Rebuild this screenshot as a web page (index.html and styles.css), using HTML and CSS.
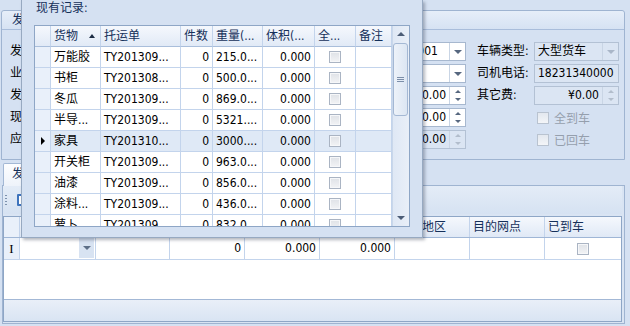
FILE: index.html
```html
<!DOCTYPE html>
<html lang="zh-CN">
<head>
  <meta charset="UTF-8">
  <title>发货登记</title>
  <link rel="stylesheet" href="styles.css">
</head>
<body>
  <div class="window">
    <div class="group">
      <div class="group-head">发货信息</div>
      <div class="group-body">
        <span class="lbl">发货日期:</span>
        <div class="edit"><span class="val">2013-10-08</span><span class="drop"></span></div>
        <span class="lbl">车次编号:</span>
        <div class="edit"><span class="val">20131001</span><span class="drop"></span></div>
        <span class="lbl side">车辆类型:</span>
        <div class="edit off"><span class="val">大型货车</span><span class="drop"></span></div>

        <span class="lbl">业务员:</span>
        <div class="edit"><span class="val"></span><span class="drop"></span></div>
        <span class="lbl">车牌号:</span>
        <div class="edit"><span class="val"></span><span class="drop"></span></div>
        <span class="lbl side">司机电话:</span>
        <div class="edit off"><span class="val">18231340000</span></div>

        <span class="lbl">发车费用:</span>
        <div class="edit num"><span class="val">0.00</span><span class="spin"><i></i><i></i></span></div>
        <span class="lbl">运费:</span>
        <div class="edit num"><span class="val">0.00</span><span class="spin"><i></i><i></i></span></div>
        <span class="lbl side">其它费:</span>
        <div class="edit num off"><span class="val">¥0.00</span><span class="spin"><i></i><i></i></span></div>

        <span class="lbl">现付:</span>
        <div class="edit num"><span class="val">0.00</span><span class="spin"><i></i><i></i></span></div>
        <span class="lbl">回付:</span>
        <div class="edit num"><span class="val">0.00</span><span class="spin"><i></i><i></i></span></div>
        <span class="lbl side"></span>
        <label class="check"><span class="box"></span>全到车</label>

        <span class="lbl">应付合计:</span>
        <div class="edit num"><span class="val">0.00</span><span class="spin"><i></i><i></i></span></div>
        <span class="lbl">已付:</span>
        <div class="edit num off"><span class="val">0.00</span><span class="spin"><i></i><i></i></span></div>
        <span class="lbl side"></span>
        <label class="check"><span class="box"></span>已回车</label>
      </div>
    </div>

    <div class="tabs">
      <div class="tab">发货明细</div>
    </div>
    <div class="tab-page">
      <div class="toolbar">
        <span class="grip"></span>
        <span class="tool-icon"></span>
      </div>
      <div class="grid">
        <div class="g-row g-head">
          <span class="ind"></span>
          <span>货物</span>
          <span>托运单</span>
          <span>件数</span>
          <span>重量(kg)</span>
          <span>体积(m³)</span>
          <span>到达地区</span>
          <span>目的网点</span>
          <span>已到车</span>
        </div>
        <div class="g-row g-data">
          <span class="ind"><b class="ibeam">I</b></span>
          <span class="lookup-cell"><i class="cell-drop"></i></span>
          <span></span>
          <span class="num">0</span>
          <span class="num">0.000</span>
          <span class="num">0.000</span>
          <span></span>
          <span></span>
          <span class="center"><i class="chk"></i></span>
        </div>
        <div class="g-empty"></div>
        <div class="g-foot"></div>
      </div>
    </div>

    <!-- 下拉弹出的记录列表 -->
    <div class="popup">
      <div class="popup-title">现有记录:</div>
      <div class="lookup">
        <div class="rows">
          <div class="row head">
            <span class="ind"></span>
            <span class="sorted">货物</span>
            <span>托运单</span>
            <span>件数</span>
            <span>重量(...</span>
            <span>体积(...</span>
            <span>全...</span>
            <span>备注</span>
          </div>
          <div class="row"><span class="ind"></span><span>万能胶</span><span>TY201309...</span><span class="num">0</span><span>215.0...</span><span class="num">0.000</span><span class="center"><i class="chk"></i></span><span></span></div>
          <div class="row"><span class="ind"></span><span>书柜</span><span>TY201308...</span><span class="num">0</span><span>500.0...</span><span class="num">0.000</span><span class="center"><i class="chk"></i></span><span></span></div>
          <div class="row"><span class="ind"></span><span>冬瓜</span><span>TY201309...</span><span class="num">0</span><span>869.0...</span><span class="num">0.000</span><span class="center"><i class="chk"></i></span><span></span></div>
          <div class="row"><span class="ind"></span><span>半导...</span><span>TY201309...</span><span class="num">0</span><span>5321....</span><span class="num">0.000</span><span class="center"><i class="chk"></i></span><span></span></div>
          <div class="row current"><span class="ind"><i class="arrow"></i></span><span>家具</span><span>TY201310...</span><span class="num">0</span><span>3000....</span><span class="num">0.000</span><span class="center"><i class="chk"></i></span><span></span></div>
          <div class="row"><span class="ind"></span><span>开关柜</span><span>TY201309...</span><span class="num">0</span><span>963.0...</span><span class="num">0.000</span><span class="center"><i class="chk"></i></span><span></span></div>
          <div class="row"><span class="ind"></span><span>油漆</span><span>TY201309...</span><span class="num">0</span><span>856.0...</span><span class="num">0.000</span><span class="center"><i class="chk"></i></span><span></span></div>
          <div class="row"><span class="ind"></span><span>涂料...</span><span>TY201309...</span><span class="num">0</span><span>436.0...</span><span class="num">0.000</span><span class="center"><i class="chk"></i></span><span></span></div>
          <div class="row"><span class="ind"></span><span>萝卜</span><span>TY201309...</span><span class="num">0</span><span>832.0...</span><span class="num">0.000</span><span class="center"><i class="chk"></i></span><span></span></div>
        </div>
        <div class="vscroll">
          <span class="sb-btn up"></span>
          <span class="thumb"></span>
          <span class="track"></span>
          <span class="sb-btn down"></span>
        </div>
      </div>
    </div>
  </div>
</body>
</html>
```

FILE: styles.css
```css
* {
  margin: 0;
  padding: 0;
  box-sizing: border-box;
}

body {
  font-family: 'DejaVu Sans Condensed', 'Liberation Sans', 'Noto Sans CJK SC', sans-serif;
  font-size: 12px;
  color: #000;
  background: #d5e1f2;
}

.window {
  position: relative;
  width: 630px;
  height: 326px;
  overflow: hidden;
  background: #d5e1f2;
}

/* 上方信息分组 */
.group {
  margin: 10px 5px 0 1px;
  border: 1px solid #9fb4d1;
  border-radius: 3px 3px 0 0;
}

.group-head {
  height: 19px;
  line-height: 18px;
  padding-left: 10px;
  color: #15305a;
  background: linear-gradient(#e6eef9, #d6e2f3);
  border-bottom: 1px solid #a9bddb;
  border-radius: 3px 3px 0 0;
}

.group-body {
  height: 129px;
  padding: 12px 0 0 8px;
  display: grid;
  grid-template-columns: 60px 233px 76px 87px 68px 85px;
  grid-auto-rows: 19px;
  row-gap: 3px;
}

.lbl {
  line-height: 19px;
  white-space: nowrap;
}

.lbl.side {
  padding-left: 11px;
}

.edit {
  display: flex;
  height: 19px;
  border: 1px solid #a7b8cf;
  background: #fff;
}

.edit .val {
  flex: 1;
  padding: 0 3px;
  line-height: 17px;
  white-space: nowrap;
  overflow: hidden;
}

.edit.num .val {
  text-align: right;
}

.edit.off {
  background: #dbe5f3;
  border-color: #b3c1d4;
}

.drop {
  width: 16px;
  border-left: 1px solid #c9d5e5;
  display: flex;
  align-items: center;
  justify-content: center;
}

.drop::after {
  content: "";
  border-left: 4px solid transparent;
  border-right: 4px solid transparent;
  border-top: 4px solid #56677f;
}

.spin {
  width: 16px;
  border-left: 1px solid #c9d5e5;
  display: flex;
  flex-direction: column;
}

.spin i {
  flex: 1;
  display: flex;
  align-items: center;
  justify-content: center;
}

.spin i:first-child::after {
  content: "";
  border-left: 3px solid transparent;
  border-right: 3px solid transparent;
  border-bottom: 3px solid #56677f;
}

.spin i:last-child::after {
  content: "";
  border-left: 3px solid transparent;
  border-right: 3px solid transparent;
  border-top: 3px solid #56677f;
}

.off .drop::after {
  border-top-color: #a9b6c8;
}

.off .spin i:first-child::after {
  border-bottom-color: #b2bdcc;
}

.off .spin i:last-child::after {
  border-top-color: #b2bdcc;
}

.check {
  display: flex;
  align-items: center;
  gap: 5px;
  padding-left: 3px;
  color: #959fad;
}

.check .box {
  width: 12px;
  height: 12px;
  border: 1px solid #b9c3d0;
  background: linear-gradient(#e3e8ef, #f3f5f8);
}

/* 明细页签 */
.tabs {
  margin-top: 3px;
  height: 22px;
  display: flex;
  align-items: flex-end;
}

.tab {
  position: relative;
  margin-left: 3px;
  margin-bottom: -1px;
  height: 23px;
  padding: 0 8px;
  line-height: 21px;
  color: #15305a;
  background: linear-gradient(#fdfeff, #eef3fa);
  border: 1px solid #a3b8d5;
  border-bottom: none;
  border-radius: 2px 2px 0 0;
}

.tab-page {
  margin: 0 5px 0 2px;
  height: 139px;
  border: 1px solid #9fb4d1;
  background: #d9e4f3;
  padding: 0 2px 0 0;
}

.toolbar {
  height: 28px;
  margin-bottom: 2px;
  display: flex;
  align-items: center;
  gap: 10px;
  padding-left: 2px;
  background: linear-gradient(#e4ecf7, #d6e2f2);
}

.grip {
  width: 2px;
  height: 12px;
  background: radial-gradient(circle, #7d91ad 45%, transparent 50%) 0 0 / 2px 3px repeat-y;
}

.tool-icon {
  width: 12px;
  height: 12px;
  border: 2px solid #3f74bd;
  border-radius: 1px;
  background: #fff;
}

.grid {
  height: 106px;
  border: 1px solid #8ea6c6;
  background: #fff;
  display: flex;
  flex-direction: column;
}

.g-row {
  display: grid;
  grid-template-columns: 16px 76px 74px 75px 75px 75px 75px 75px 1fr;
}

.g-row span {
  border-right: 1px solid #c3d4ec;
  padding: 0 3px;
  white-space: nowrap;
  overflow: hidden;
}

.g-row span:last-child {
  border-right: none;
}

.g-head {
  height: 21px;
  line-height: 20px;
  color: #15305a;
  background: linear-gradient(#f5f8fd, #e0e9f6);
  border-bottom: 1px solid #9fb6d6;
}

.g-data {
  height: 22px;
  line-height: 21px;
  border-bottom: 1px solid #c3d4ec;
}

.g-row .ind {
  padding: 0;
  background: #e9f0fa;
  text-align: center;
}

.ibeam {
  font-family: 'Liberation Serif', serif;
  font-weight: normal;
  font-size: 13px;
}

.lookup-cell {
  display: flex;
  justify-content: flex-end;
  align-items: stretch;
  padding: 0 1px 1px 0 !important;
}

.cell-drop {
  width: 15px;
  background: #d8e3f2;
  display: flex;
  align-items: center;
  justify-content: center;
}

.cell-drop::after {
  content: "";
  border-left: 4px solid transparent;
  border-right: 4px solid transparent;
  border-top: 4px solid #5d6f88;
}

.num {
  text-align: right;
}

.center {
  display: flex;
  align-items: center;
  justify-content: center;
}

.chk {
  width: 12px;
  height: 12px;
  border: 1px solid #aab4c3;
  background: linear-gradient(#dfe2e7, #f2f3f5);
  box-shadow: inset 0 0 0 1px #f6f7f9;
}

.g-empty {
  flex: 1;
}

.g-foot {
  height: 22px;
  border-top: 1px solid #a3b8d6;
  background: linear-gradient(#e9eff8, #d9e4f3);
}

/* 弹出列表 */
.popup {
  position: absolute;
  left: 21px;
  top: 0;
  width: 402px;
  height: 238px;
  padding: 0 12px;
  background: #d5e1f2;
  border: 1px solid #97a9c1;
  border-top: none;
  box-shadow: 2px 2px 3px rgba(40, 50, 70, 0.35);
}

.popup-title {
  height: 25px;
  padding-left: 2px;
  line-height: 16px;
  color: #15305a;
}

.lookup {
  width: 376px;
  height: 202px;
  border: 1px solid #8ea6c6;
  background: #fff;
  display: flex;
  overflow: hidden;
}

.rows {
  width: 357px;
}

.row {
  display: grid;
  grid-template-columns: 16px 50px 80px 32px 50px 52px 41px 36px;
  height: 21px;
  line-height: 20px;
}

.row span {
  border-right: 1px solid #c3d4ec;
  border-bottom: 1px solid #c3d4ec;
  padding: 0 3px;
  white-space: nowrap;
  overflow: hidden;
}

.row.head {
  color: #15305a;
  background: linear-gradient(#f5f8fd, #e0e9f6);
}

.row.head span {
  border-bottom-color: #a9bedb;
}

.row .ind {
  padding: 0;
  background: #e9f0fa;
  display: flex;
  align-items: center;
  justify-content: center;
}

.row.head .ind {
  background: transparent;
}

.row.current span {
  background: #dfe9f6;
}

.row.current .ind {
  background: #e9f0fa;
}

.arrow {
  border-top: 4px solid transparent;
  border-bottom: 4px solid transparent;
  border-left: 4px solid #000;
}

.sorted {
  position: relative;
}

.sorted::after {
  content: "";
  position: absolute;
  right: 5px;
  top: 8px;
  border-left: 3.5px solid transparent;
  border-right: 3.5px solid transparent;
  border-bottom: 4px solid #1c2c44;
}

.vscroll {
  width: 17px;
  display: flex;
  flex-direction: column;
  background: linear-gradient(90deg, #dfe8f5, #e9eff8);
  border-left: 1px solid #c9d7ea;
}

.sb-btn {
  height: 16px;
  display: flex;
  align-items: center;
  justify-content: center;
}

.sb-btn.up::after {
  content: "";
  border-left: 4px solid transparent;
  border-right: 4px solid transparent;
  border-bottom: 4px solid #4c5d77;
}

.sb-btn.down::after {
  content: "";
  border-left: 4px solid transparent;
  border-right: 4px solid transparent;
  border-top: 4px solid #4c5d77;
}

.thumb {
  height: 73px;
  margin: 1px 1px 0 0;
  border: 1px solid #a4b8d4;
  border-radius: 3px;
  background: linear-gradient(90deg, #edf2f9, #dce6f3);
  display: flex;
  align-items: center;
  justify-content: center;
}

.thumb::after {
  content: "";
  width: 7px;
  height: 5px;
  background: repeating-linear-gradient(#7b8ea9 0 1px, transparent 1px 2px);
}

.track {
  flex: 1;
}
```
